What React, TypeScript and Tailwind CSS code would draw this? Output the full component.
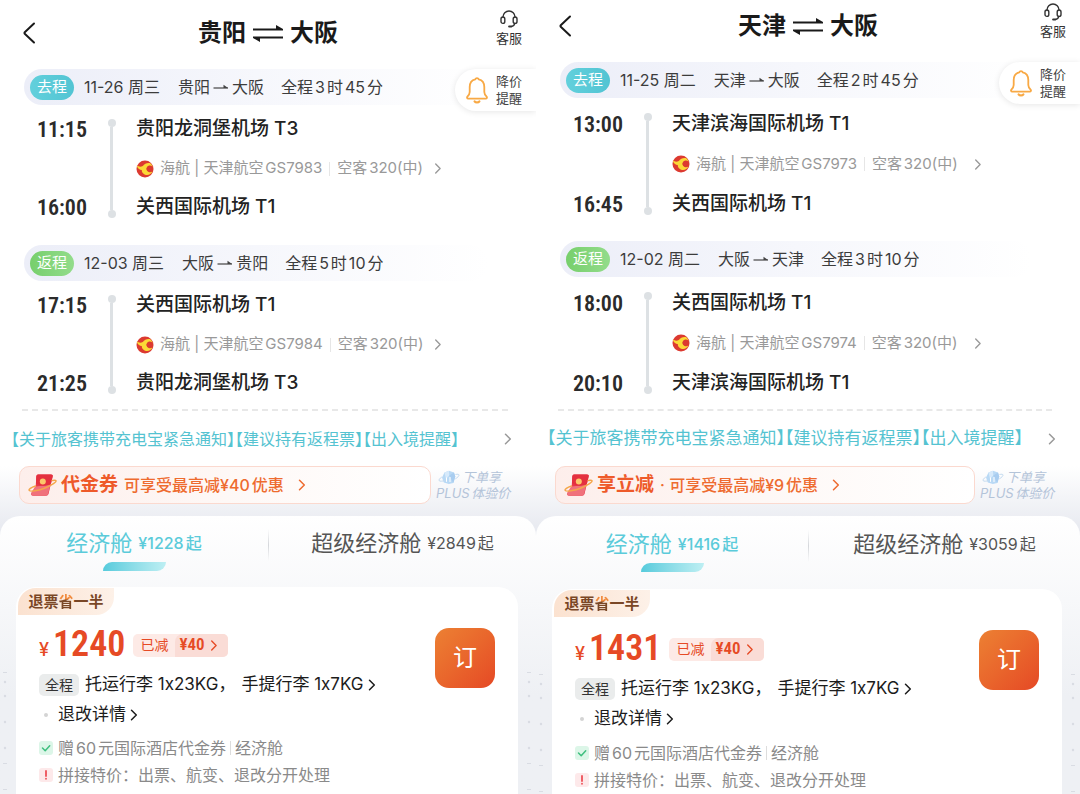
import React from 'react'
import { clsx } from 'clsx'

type LegInfo = {
  kind: 'go' | 'back'
  date: string
  from: string
  to: string
  duration: string
  depart: string
  arrive: string
  departAirport: string
  arriveAirport: string
  flight: string
}

type Trip = {
  from: string
  to: string
  legs: LegInfo[]
  couponTitle: string
  couponText: string
  economy: string
  premium: string
  price: string
}

const trips: Trip[] = [
  {
    from: '贵阳',
    to: '大阪',
    legs: [
      {
        kind: 'go',
        date: '11-26 周三',
        from: '贵阳',
        to: '大阪',
        duration: '全程3时45分',
        depart: '11:15',
        arrive: '16:00',
        departAirport: '贵阳龙洞堡机场 T3',
        arriveAirport: '关西国际机场 T1',
        flight: 'GS7983',
      },
      {
        kind: 'back',
        date: '12-03 周三',
        from: '大阪',
        to: '贵阳',
        duration: '全程5时10分',
        depart: '17:15',
        arrive: '21:25',
        departAirport: '关西国际机场 T1',
        arriveAirport: '贵阳龙洞堡机场 T3',
        flight: 'GS7984',
      },
    ],
    couponTitle: '代金券',
    couponText: '可享受最高减¥40优惠',
    economy: '¥1228起',
    premium: '¥2849起',
    price: '1240',
  },
  {
    from: '天津',
    to: '大阪',
    legs: [
      {
        kind: 'go',
        date: '11-25 周二',
        from: '天津',
        to: '大阪',
        duration: '全程2时45分',
        depart: '13:00',
        arrive: '16:45',
        departAirport: '天津滨海国际机场 T1',
        arriveAirport: '关西国际机场 T1',
        flight: 'GS7973',
      },
      {
        kind: 'back',
        date: '12-02 周二',
        from: '大阪',
        to: '天津',
        duration: '全程3时10分',
        depart: '18:00',
        arrive: '20:10',
        departAirport: '关西国际机场 T1',
        arriveAirport: '天津滨海国际机场 T1',
        flight: 'GS7974',
      },
    ],
    couponTitle: '享立减',
    couponText: '· 可享受最高减¥9优惠',
    economy: '¥1416起',
    premium: '¥3059起',
    price: '1431',
  },
]

/* icons */

const Chevron = ({ className }: { className?: string }) => (
  <svg viewBox="0 0 8 12" className={clsx('shrink-0', className)} fill="none" stroke="currentColor" strokeWidth="1.5" strokeLinecap="round" strokeLinejoin="round">
    <path d="M1.5 1.2 6.3 6 1.5 10.8" />
  </svg>
)

const BackIcon = () => (
  <svg viewBox="0 0 14 22" className="h-[22px] w-[14px]" fill="none" stroke="#1a1a1a" strokeWidth="2" strokeLinecap="round" strokeLinejoin="round">
    <path d="M12 1.5 3 10q-1.100 1 0 2l9 8.500" />
  </svg>
)

const SwapIcon = () => (
  <svg viewBox="0 0 32 20" className="h-5 w-8" fill="#1a1a1a">
    <path d="M1 5.600H24V2L31 6v1.400H1z" />
    <path d="M31 15.400H8V19L1 15v-1.400H31z" />
  </svg>
)

const HeadsetIcon = () => (
  <svg viewBox="0 0 20 20" className="size-5" fill="none" stroke="#333" strokeWidth="1.400" strokeLinecap="round">
    <path d="M4 8.500V8a6 6 0 0 1 12 0v.5" />
    <rect x="2" y="8" width="3.800" height="6.400" rx="1.900" />
    <rect x="14.200" y="8" width="3.800" height="6.400" rx="1.900" />
    <path d="M15.800 14.400c-.4 1.900-1.600 2.900-3.400 3.100" />
    <path d="M10.200 17.500h1.800" strokeWidth="2.200" />
  </svg>
)

const BellIcon = () => (
  <svg viewBox="0 0 24 28" className="h-7 w-6" fill="none" stroke="#f8a945" strokeWidth="1.800" strokeLinecap="round" strokeLinejoin="round">
    <path d="M10.300 3.300a1.800 1.800 0 0 1 3.400 0c3.500.8 5.600 3.800 5.600 7.700v5c0 1.700.6 2.800 2.300 4.600.8.900.3 2-.8 2H3.200c-1.100 0-1.600-1.100-.8-2 1.700-1.800 2.300-2.900 2.300-4.600v-5c0-3.900 2.100-6.900 5.600-7.700z" />
    <path d="M9.600 25.300c1 1.500 3.800 1.500 4.800 0" strokeWidth="2.200" />
  </svg>
)

const ArrowIcon = () => (
  <svg viewBox="0 0 16 8" className="h-2 w-4" fill="none" stroke="#444" strokeWidth="1.200">
    <path d="M.5 5H15" />
    <path d="M10.500 1.800 15 5h-4.500z" fill="#444" stroke="none" />
  </svg>
)

const AirlineLogo = () => (
  <svg viewBox="0 0 18 18" className="size-[18px] shrink-0">
    <circle cx="9" cy="9" r="8.500" fill="#dc3a30" />
    <path d="M.8 5.600c1.800 1.200 4.200 1.600 6 .3C8.600 3.600 11.200 2.600 14.300 3.200c1.200 1 2 2.200 2.500 3.600-1.300-1.300-3-1.700-4.300-1-2 1-2.400 3.600-1.200 5.200 1.200 1.400 3.400 1.700 5.200.6-1.600 3.200-5.100 4.400-7.900 2.800C6.600 13.400 5.600 11.700 5.800 10.100 3.600 10.100 1.400 8.500.8 5.600z" fill="#fbd936" />
    <circle cx="13" cy="8.700" r="2.500" fill="#dc3a30" />
  </svg>
)

const CouponIcon = () => (
  <svg viewBox="0 0 30 24" className="h-6 w-[30px] shrink-0">
    <path d="M10 1.500h13q2.200 0 1.600 2.200L20.500 21q-.6 1.700-2.500 1.700H5.500q-3.200 0-2-2.900l4.200-6 .6-10.300q.2-2 1.700-2z" fill="#e8374a" />
    <path d="M7 13.500 22.300 12 20 21.300q-.5 1.400-2.200 1.400H5.500q-3.200 0-2-2.900z" fill="#f0717b" />
    <path d="M8.300 3.500q.2-2 1.700-2h13q2.200 0 1.600 2.200l-1.600 6.600c-4 3.300-11 3.300-15 0z" fill="#e4303f" />
    <path d="M7.500 13c-4.500 1.500-7 3.300-6.300 4.300 1.200 1.800 9 .5 16.500-2.600C24 12 28.700 8.900 28 7.700c-.3-.6-1.800-.6-3.800-.2" fill="none" stroke="#f5a64a" strokeWidth="1.500" strokeLinecap="round" />
    <circle cx="14.800" cy="8.600" r="3" fill="#fcc66b" />
  </svg>
)

const PlusIcon = () => (
  <svg viewBox="0 0 22 15" className="h-[15px] w-[22px]">
    <path d="M6.500 2.500 11 .8l5 1.700 1.300 4.300-2 6.200-4.500 1-5-1.500L4 7.500z" fill="#b9d9f5" />
    <path d="M6.500 2.500 11 .8l.2 4.700L8 9z" fill="#d7eafb" />
    <path d="m11.200 5.500 4.800-3 1.300 4.300-2 6.200z" fill="#a9cdf0" />
    <path d="M8.500 7.500v4.300M12 7v5" stroke="#fff" strokeWidth="1" />
    <path d="M3.800 7C1.500 8.500.6 10 1.200 10.700c.7.800 3 .6 6-.2M17.500 4.500c2-.4 3.300-.3 3.500.4.300.9-1.300 2.600-3.700 4" fill="none" stroke="#c3daf0" strokeWidth="1" />
  </svg>
)

/* faint perforation marks beside the fare card */
const Perforation = ({ className }: { className?: string }) => (
  <svg viewBox="0 0 6 130" className={clsx('h-[130px] w-[6px]', className)} fill="#d9dce3">
    <rect x="1" y="3" width="4" height="1" />
    <circle cx="3" cy="13" r="1.200" />
    <circle cx="3" cy="27" r="1.200" />
    <circle cx="3" cy="53" r="1.200" />
    <circle cx="3" cy="79" r="1.200" />
    <rect x="1" y="94" width="4" height="1" />
    <rect x="1" y="120" width="4" height="1" />
  </svg>
)

const Leg = ({ leg, roomy }: { leg: LegInfo; roomy: boolean }) => {
  const row = clsx('flex items-center', roomy ? 'h-10' : 'h-[39px]')
  return (
    <section className="relative">
      {/* leg header */}
      <div className="ml-6 mr-12 flex h-9 items-center rounded-full bg-linear-to-r from-[#eceef8] via-[#f6f7fc] to-white pl-[6px] text-base text-[#3c3c3c]">
        <span
          className={clsx(
            'flex h-[25px] w-11 items-center justify-center rounded-full bg-linear-to-r text-[15px] text-white',
            leg.kind === 'go' ? 'from-[#62d0dc] to-[#52c4d3]' : 'from-[#77cf6c] to-[#93dc8b]',
          )}
        >
          {leg.kind === 'go' ? '去程' : '返程'}
        </span>
        <span className="ml-[10px]">{leg.date}</span>
        <span className="ml-[18px] flex items-center gap-[3px]">
          {leg.from}
          <ArrowIcon />
          {leg.to}
        </span>
        <span className="ml-[17px]">{leg.duration}</span>
      </div>

      {/* times and airports */}
      <div className={clsx('flex', roomy ? 'pt-[6px]' : 'pt-[5px]')}>
        <div className="flex w-[87px] flex-col justify-between text-right font-['Roboto_Condensed','Liberation_Sans_Narrow',Roboto,sans-serif] text-[22px] font-semibold text-[#2b2b2b]">
          <p className={clsx(row, 'justify-end')}>{leg.depart}</p>
          <p className={clsx(row, 'justify-end')}>{leg.arrive}</p>
        </div>
        <div className="flex w-[49px] flex-col items-center py-[9px]">
          <span className="size-2 rounded-full bg-[#dde1e4]"></span>
          <span className="w-[3px] flex-1 bg-[#dde1e4]"></span>
          <span className="size-2 rounded-full bg-[#dde1e4]"></span>
        </div>
        <div>
          <p className={clsx(row, 'text-[19px] font-medium text-[#222]')}>{leg.departAirport}</p>
          <button className={clsx(row, 'text-[15px] text-[#999]')}>
            <AirlineLogo />
            <span className="ml-[6px]">海航 | 天津航空{leg.flight}</span>
            <span className="mx-[7px] h-[14px] w-px bg-[#e6e6e6]"></span>
            <span>空客320(中)</span>
            <Chevron className={clsx('h-[11px] w-2 text-[#999]', roomy ? 'ml-4' : 'ml-[11px]')} />
          </button>
          <p className={clsx(row, 'text-[19px] font-medium text-[#222]')}>{leg.arriveAirport}</p>
        </div>
      </div>

      {/* price drop reminder */}
      {leg.kind === 'go' && (
        <button className="absolute right-0 top-0 flex h-[42px] items-center gap-[7px] rounded-l-full bg-white pl-[10px] pr-3 text-[#444] shadow-[0_1px_6px_rgba(0,0,0,0.1)] [clip-path:inset(-10px_0_-10px_-10px)]">
          <BellIcon />
          <span className="w-7 text-left text-[13px] leading-[17px]">降价提醒</span>
        </button>
      )}
    </section>
  )
}

const FareCard = ({ price, roomy }: { price: string; roomy: boolean }) => {
  return (
    <div className="flex flex-1">
      <div className="w-4 shrink-0 pt-[82px]">
        <Perforation className="ml-[2px]" />
      </div>
      <article className="flex-1 rounded-t-[20px] bg-white px-[2px] pt-px">
        <p className="w-24 rounded-br-[18px] rounded-tl-[18px] bg-linear-to-r from-[#fbe2d0] to-[#fdf1e8] text-center text-[15px] font-bold leading-[27px] text-[#7a4726]">
          退票
          <span className="bg-linear-to-b from-[#f08a3c] from-35% to-[#7a4726] to-45% bg-clip-text text-transparent">省</span>
          一半
        </p>

        <div className="flex items-start justify-between pl-[21px] pr-[21px]">
          <div className="whitespace-nowrap">
            {/* price */}
            <div className={clsx('flex h-[34px] items-center', roomy ? 'mt-[15px]' : 'mt-[13px]')}>
              <p className="flex items-baseline font-['Roboto_Condensed','Liberation_Sans_Narrow',Roboto,sans-serif] font-semibold text-[#e64a25]">
                <span className="w-[14px] font-[Inter,sans-serif] text-lg font-medium">¥</span>
                <span className="text-4xl leading-[34px]">{price}</span>
              </p>
              <button className="ml-2 flex h-[23px] items-center overflow-hidden rounded-[5px] bg-[#fdeae6] text-[#e64a25]">
                <span className="px-[7px] text-sm">已减</span>
                <span className="flex h-full items-center rounded-tl-lg bg-[#fadcd6] pl-1 pr-[10px] font-['Roboto_Condensed','Liberation_Sans_Narrow',Roboto,sans-serif] text-[17px] font-semibold">
                  ¥40
                  <Chevron className="ml-[5px] h-[11px] w-2" />
                </span>
              </button>
            </div>

            {/* baggage */}
            <button className="mt-[11px] flex h-6 items-center text-[17px] text-[#1c1c1c]">
              <span className="mr-[6px] flex h-[22px] items-center rounded-[5px] bg-[#eaecec] px-[6px] text-sm text-[#333]">全程</span>
              <span className="mr-[6px]">托运行李 1x23KG，</span>
              <span>手提行李 1x7KG</span>
              <Chevron className="ml-1 h-3 w-2" />
            </button>
            <button className="mt-[6px] flex h-6 items-center text-[17px] text-[#1c1c1c]">
              <span className="ml-[5px] mr-[10px] size-1 rounded-full bg-[#d4d4d4]"></span>
              退改详情
              <Chevron className="ml-1 h-3 w-2" />
            </button>

            {/* notes */}
            <p className={clsx('flex h-6 items-center text-base text-[#8a8a8a]', roomy ? 'mt-[10px]' : 'mt-[9px]')}>
              <svg viewBox="0 0 14 14" className="mr-[5px] size-[14px]">
                <rect width="14" height="14" rx="3" fill="#dcf6e8" />
                <path d="m3.500 7 2.700 2.700 4.500-5" fill="none" stroke="#3fbf7f" strokeWidth="1.500" strokeLinecap="round" strokeLinejoin="round" />
              </svg>
              赠60元国际酒店代金券
              <span className="mx-1 h-[14px] w-px bg-[#ddd]"></span>
              经济舱
            </p>
            <p className="mt-[3px] flex h-6 items-center text-base text-[#8a8a8a]">
              <svg viewBox="0 0 14 14" className="mr-[5px] size-[14px]">
                <rect width="14" height="14" rx="3" fill="#fde9ea" />
                <path d="M7 3v5M7 10.600v.2" stroke="#ee5058" strokeWidth="1.800" strokeLinecap="round" />
              </svg>
              拼接特价：出票、航变、退改分开处理
            </p>
          </div>

          <button className="mt-[13px] size-[60px] rounded-[14px] bg-linear-to-br from-[#ec8033] to-[#e54825] text-2xl text-white">订</button>
        </div>
      </article>
      <div className="w-[18px] shrink-0 pt-[82px]">
        <Perforation className="ml-2" />
      </div>
    </div>
  )
}

const TripPanel = ({ trip, roomy }: { trip: Trip; roomy: boolean }) => {
  return (
    <div className="flex min-w-0 flex-col">
      {/* header */}
      <header className={clsx('mb-3 grid h-12 grid-cols-[1fr_auto_1fr] items-center', roomy ? 'mt-[2px]' : 'mt-[9px]')}>
        <button aria-label="返回" className="justify-self-start pl-[22px]">
          <BackIcon />
        </button>
        <h1 className="flex items-center gap-[6px] text-2xl font-bold text-[#1a1a1a]">
          {trip.from}
          <SwapIcon />
          {trip.to}
        </h1>
        <button className="flex flex-col items-center self-start justify-self-end pr-[14px] text-[13px] leading-[18px] text-[#333]">
          <HeadsetIcon />
          客服
        </button>
      </header>

      {/* legs */}
      <div className={clsx('flex flex-col', roomy ? 'gap-[17px]' : 'gap-[18px]')}>
        {trip.legs.map((leg) => (
          <Leg key={leg.kind} leg={leg} roomy={roomy} />
        ))}
      </div>

      <div className="ml-[22px] mr-7 mt-[6px] border-t-2 border-dashed border-[#e8e8e8]"></div>

      {/* notices */}
      <button
        className={clsx(
          "flex h-[55px] items-center justify-between whitespace-nowrap pl-[11px] pr-6 text-[#55c3d1] [font-feature-settings:'halt']",
          roomy ? 'text-[17px]' : 'text-base',
        )}
      >
        【关于旅客携带充电宝紧急通知】【建议持有返程票】【出入境提醒】
        <Chevron className="h-3 w-2 text-[#999]" />
      </button>

      <div className="flex flex-1 flex-col bg-linear-to-b from-white to-[#e9ebf1] to-[60px]">
        {/* coupon */}
        <div className="flex items-center pb-3 pl-[19px]">
          <button className="flex h-[38px] flex-1 items-center whitespace-nowrap rounded-[10px] border border-[#fbd9cf] bg-linear-to-r from-[#fdeeeb] via-[#fef8f6] to-white pl-2 text-[#ee6b2f]">
            <CouponIcon />
            <span className="ml-[3px] text-[19px] font-bold text-[#ee5a2a]">{trip.couponTitle}</span>
            <span className="ml-[6px] text-base font-medium">{trip.couponText}</span>
            <Chevron className="ml-[14px] h-3 w-2" />
          </button>
          <p className="w-[105px] pl-[5px] text-[13px] italic leading-4 text-[#b4c4d9]">
            <span className="flex items-center gap-[2px] pl-[2px]">
              <PlusIcon />
              下单享
            </span>
            PLUS体验价
          </p>
        </div>

        {/* cabins */}
        <div className="flex flex-1 flex-col rounded-t-[20px] bg-linear-to-b from-white to-[#eef0f4] to-[180px]">
          <div className={clsx('grid grid-cols-2 whitespace-nowrap', roomy ? 'pb-[17px] pt-[14px]' : 'pb-4 pt-[13px]')}>
            <button className="flex flex-col items-center text-[#5bcbda]">
              <span className="flex items-center gap-[6px] text-[22px] leading-7">
                经济舱
                <span className="text-base font-medium">{trip.economy}</span>
              </span>
              <span className="mt-[5px] h-[9px] w-[63px] rounded-br-[9px] rounded-tl-[9px] bg-linear-to-r from-[#55cbdc] to-[#bdeff3]"></span>
            </button>
            <button className="flex items-start text-[#555]">
              <span className="h-8 w-px bg-linear-to-b from-transparent via-[#d5d7db] to-transparent"></span>
              <span className="flex flex-1 items-center justify-center gap-[6px] text-[22px] leading-7">
                超级经济舱
                <span className="text-base">{trip.premium}</span>
              </span>
            </button>
          </div>

          <FareCard price={trip.price} roomy={roomy} />
        </div>
      </div>
    </div>
  )
}

const App = () => {
  return (
    <main className="grid min-h-screen grid-cols-[67fr_68fr] bg-white font-[Inter,'Noto_Sans_CJK_SC',sans-serif] [text-autospace:normal]">
      <TripPanel trip={trips[0]} roomy={false} />
      <TripPanel trip={trips[1]} roomy={true} />
    </main>
  )
}

export default App
